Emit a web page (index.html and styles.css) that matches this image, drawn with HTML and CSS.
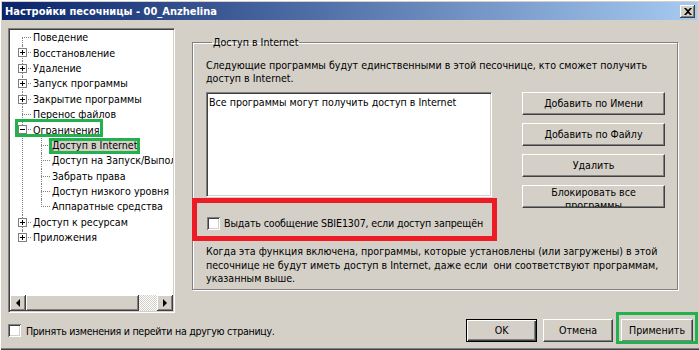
FILE: index.html
```html
<!DOCTYPE html>
<html lang="ru">
<head>
    <meta charset="UTF-8">
    <title>Настройки песочницы - 00_Anzhelina</title>
    <link rel="stylesheet" href="styles.css">
</head>
<body>
<div class="window">
    <div class="titlebar">
        <span class="title">Настройки песочницы - 00_Anzhelina</span>
        <span class="close-btn">
            <svg width="8" height="7" viewBox="0 0 8 7"><path d="M0 0h2l2 2 2-2h2L5 3.5 8 7H6L4 5 2 7H0l3-3.5z" fill="#000"/></svg>
        </span>
    </div>

    <div class="main">
        <!-- Tree of settings pages -->
        <div class="tree">
            <div class="tree-view">
                <ul class="nodes root">
                    <li><div class="row l1"><span class="gutter"></span><span class="label">Поведение</span></div></li>
                    <li><div class="row l1"><span class="gutter"><span class="exp plus"></span></span><span class="label">Восстановление</span></div></li>
                    <li><div class="row l1"><span class="gutter"><span class="exp plus"></span></span><span class="label">Удаление</span></div></li>
                    <li><div class="row l1"><span class="gutter"><span class="exp plus"></span></span><span class="label">Запуск программы</span></div></li>
                    <li><div class="row l1"><span class="gutter"><span class="exp plus"></span></span><span class="label">Закрытие программы</span></div></li>
                    <li><div class="row l1"><span class="gutter"></span><span class="label">Перенос файлов</span></div></li>
                    <li>
                        <div class="row l1 mark-parent"><span class="gutter"><span class="exp"></span></span><span class="label">Ограничения</span></div>
                        <ul class="nodes sub">
                            <li><div class="row l2 mark-child"><span class="gutter"></span><span class="label selected">Доступ в Internet</span></div></li>
                            <li><div class="row l2"><span class="gutter"></span><span class="label">Доступ на Запуск/Выполнение</span></div></li>
                            <li><div class="row l2"><span class="gutter"></span><span class="label">Забрать права</span></div></li>
                            <li><div class="row l2"><span class="gutter"></span><span class="label">Доступ низкого уровня</span></div></li>
                            <li><div class="row l2"><span class="gutter"></span><span class="label">Аппаратные средства</span></div></li>
                        </ul>
                    </li>
                    <li><div class="row l1"><span class="gutter"><span class="exp plus"></span></span><span class="label">Доступ к ресурсам</span></div></li>
                    <li><div class="row l1"><span class="gutter"><span class="exp plus"></span></span><span class="label">Приложения</span></div></li>
                </ul>
            </div>
            <div class="hscroll">
                <span class="sb-btn"><span class="arrow left"></span></span>
                <span class="sb-thumb"></span>
                <span class="sb-track"></span>
                <span class="sb-btn"><span class="arrow right"></span></span>
            </div>
        </div>

        <!-- Internet access page -->
        <fieldset class="page">
            <legend>Доступ в Internet</legend>
            <p class="desc">Следующие программы будут единственными в этой песочнице, кто сможет получить<br>доступ в Internet.</p>
            <div class="lists">
                <div class="listbox">Все программы могут получить доступ в Internet</div>
                <div class="side-buttons">
                    <span class="btn">Добавить по Имени</span>
                    <span class="btn">Добавить по Файлу</span>
                    <span class="btn">Удалить</span>
                    <span class="btn wrap">Блокировать все<br>программы</span>
                </div>
            </div>
            <label class="check-row mark-red"><span class="checkbox"></span>Выдать сообщение SBIE1307, если доступ запрещён</label>
            <p class="note">Когда эта функция включена, программы, которые установлены (или загружены) в этой<br>песочнице не будут иметь доступ в Internet, даже если &nbsp;они соответствуют программам,<br>указанным выше.</p>
        </fieldset>
    </div>

    <div class="footer">
        <label class="check-row"><span class="checkbox"></span>Принять изменения и перейти на другую страницу.</label>
        <span class="btn default ok">OK</span>
        <span class="btn cancel">Отмена</span>
        <span class="btn apply mark-apply">Применить</span>
    </div>
</div>
</body>
</html>
```

FILE: styles.css
```css
/* Classic dialog look */
*, *::before, *::after {
    box-sizing: border-box;
}

body {
    margin: 0;
    background: #d4d0c8;
    font-family: "DejaVu Sans Condensed", "Liberation Sans", sans-serif;
    font-size: 10.6px;
    color: #000;
}

.window {
    width: 699px;
    height: 350px;
    padding: 2px 2px 0 2px;
    box-shadow: inset 1px 1px #fff, inset 0 -1px #404040, inset 0 -2px #808080;
}

.titlebar {
    height: 18px;
    display: flex;
    align-items: center;
    padding: 0 2px 0 3px;
    background: linear-gradient(to right, #0a246a, #a6caf0);
}

.title {
    flex: 1;
    color: #fff;
    font-weight: bold;
    font-size: 11px;
}

.close-btn {
    width: 15px;
    height: 13px;
    display: flex;
    align-items: center;
    justify-content: center;
    background: #d4d0c8;
    box-shadow: inset -1px -1px #404040, inset 1px 1px #fff, inset -2px -2px #808080;
}

.main {
    display: flex;
    align-items: flex-start;
    padding: 8px 0 0 6px;
}

/* Tree */
.tree {
    width: 167px;
    height: 285px;
    padding: 1px;
    background: #fff;
    border: 1px solid;
    border-color: #808080 #fff #fff #808080;
    box-shadow: inset 1px 1px #404040, inset -1px -1px #d4d0c8;
    display: flex;
    flex-direction: column;
}

.tree-view {
    flex: 1;
    overflow: hidden;
}

.nodes {
    list-style: none;
    margin: 0;
    padding: 0;
}

.nodes li {
    position: relative;
}

.nodes li::before {
    content: "";
    position: absolute;
    top: 0;
    bottom: 0;
    border-left: 1px dotted #808080;
}

.root > li::before { left: 12px; }
.sub > li::before { left: 31px; }

.root > li:first-child::before { top: 7.7px; }
.nodes > li:last-child::before { bottom: auto; height: 7.7px; }

.row {
    height: 15.4px;
    display: flex;
    align-items: center;
    position: relative;
    white-space: nowrap;
}

.gutter {
    position: relative;
    height: 100%;
    flex: none;
}

.l1 .gutter { width: 21px; }
.l2 .gutter { width: 40px; }

.gutter::after {
    content: "";
    position: absolute;
    right: 0;
    top: 7px;
    border-top: 1px dotted #808080;
}

.l1 .gutter::after { left: 12px; }
.l2 .gutter::after { left: 31px; }

.exp {
    position: absolute;
    left: 8px;
    top: 3px;
    width: 9px;
    height: 9px;
    border: 1px solid #808080;
    background: #fff;
    z-index: 1;
}

.exp::before {
    content: "";
    position: absolute;
    left: 1px;
    top: 3px;
    width: 5px;
    height: 1px;
    background: #000;
}

.exp.plus::after {
    content: "";
    position: absolute;
    left: 3px;
    top: 1px;
    width: 1px;
    height: 5px;
    background: #000;
}

.label {
    padding: 0 2px;
    line-height: 13px;
}

.label.selected {
    background: #d4d0c8;
}

.mark-parent::after,
.mark-child::after {
    content: "";
    position: absolute;
    border: 3px solid #22b14c;
    z-index: 2;
}

.mark-parent::after {
    left: 5px;
    top: -3px;
    width: 88px;
    height: 18px;
}

.mark-child::after {
    left: 39px;
    top: 0;
    width: 91px;
    height: 16px;
}

.hscroll {
    height: 16px;
    display: flex;
    flex: none;
}

.sb-btn,
.sb-thumb {
    background: #d4d0c8;
    box-shadow: inset -1px -1px #404040, inset 1px 1px #fff, inset -2px -2px #808080;
}

.sb-btn {
    width: 16px;
    display: flex;
    align-items: center;
    justify-content: center;
}

.sb-thumb {
    width: 113px;
}

.sb-track {
    flex: 1;
    background: repeating-conic-gradient(#fff 0 25%, #d4d0c8 0 50%) 0 0 / 2px 2px;
}

.arrow {
    width: 0;
    height: 0;
    border-top: 4px solid transparent;
    border-bottom: 4px solid transparent;
}

.arrow.left { border-right: 4px solid #000; }
.arrow.right { border-left: 4px solid #000; }

/* Group page */
.page {
    margin: 8px 0 0 17px;
    padding: 10px 0 0 13px;
    width: 486px;
    height: 254px;
    border: 1px solid #808080;
    box-shadow: 1px 1px #fff, inset 1px 1px #fff;
    min-width: 0;
}

.page legend {
    margin-left: 6px;
    padding: 0 1px;
    line-height: 13px;
}

.desc,
.note {
    margin: 0;
    line-height: 13px;
    white-space: nowrap;
}

.lists {
    display: flex;
    align-items: flex-start;
    margin-top: 7px;
}

.listbox {
    width: 286px;
    height: 105px;
    padding: 3px 2px;
    line-height: 13px;
    background: #fff;
    border: 1px solid;
    border-color: #808080 #fff #fff #808080;
    box-shadow: inset 1px 1px #404040, inset -1px -1px #d4d0c8;
}

.side-buttons {
    margin-left: 30px;
    width: 143px;
    display: flex;
    flex-direction: column;
    gap: 8px;
}

.btn {
    height: 23px;
    display: flex;
    align-items: center;
    justify-content: center;
    text-align: center;
    line-height: 13px;
    overflow: hidden;
    background: #d4d0c8;
    border: 1px solid;
    border-color: #fff #404040 #404040 #fff;
    box-shadow: inset -1px -1px #808080;
}

.btn.wrap {
    padding-top: 4px;
}

.btn.default {
    border: 1px solid #000;
    box-shadow: inset 1px 1px #fff, inset -1px -1px #404040, inset -2px -2px #808080;
}

.check-row {
    display: flex;
    align-items: center;
    height: 14px;
    position: relative;
    white-space: nowrap;
}

.checkbox {
    width: 13px;
    height: 13px;
    margin-right: 5px;
    background: #fff;
    box-shadow: inset 1px 1px #808080, inset -1px -1px #fff, inset 2px 2px #404040, inset -2px -2px #d4d0c8;
}

.page .check-row {
    margin-top: 8px;
    padding-left: 1px;
    letter-spacing: -0.15px;
}

.page .checkbox {
    margin-right: 4px;
}

.mark-red::after {
    content: "";
    position: absolute;
    left: -14px;
    top: -18px;
    width: 305px;
    height: 43px;
    border: 5px solid #ed1c24;
}

.note {
    margin-top: 15px;
    line-height: 13.5px;
}

/* Bottom bar */
.footer {
    display: flex;
    align-items: center;
    height: 35px;
    padding: 0 4px 0 6px;
}

.footer .check-row {
    letter-spacing: -0.3px;
}

.footer .ok {
    margin-left: auto;
    width: 71px;
}

.footer .cancel {
    margin-left: 6px;
    width: 70px;
}

.footer .apply {
    margin-left: 8px;
    width: 72px;
    position: relative;
    overflow: visible;
}

.mark-apply::after {
    content: "";
    position: absolute;
    left: -6px;
    top: -8px;
    width: 82px;
    height: 32px;
    border: 3px solid #22b14c;
}
```
